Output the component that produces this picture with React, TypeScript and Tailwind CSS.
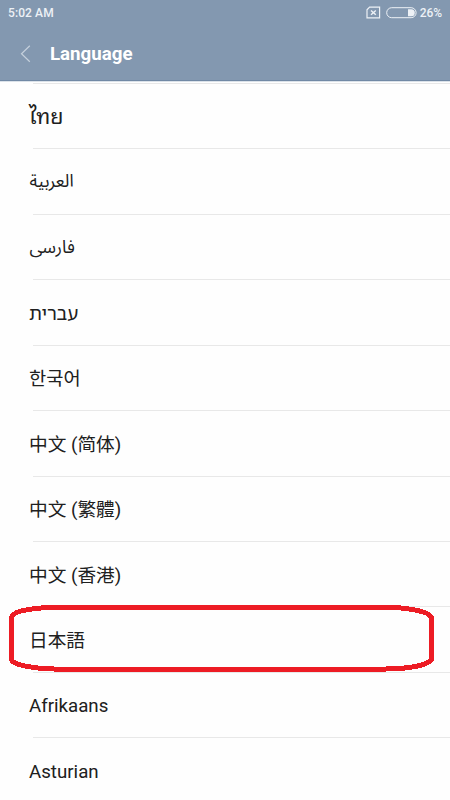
import React from 'react';

type Language = {
  name: string;
  lang: string;
  className: string;
};

const languages: Language[] = [
  { name: 'ไทย', lang: 'th', className: "pb-[2px] text-[21.5px] font-['Noto_Sans_Thai_Looped','Loma','Garuda','Noto_Sans',sans-serif]" },
  { name: 'العربية', lang: 'ar', className: "pb-[2px] pl-[0.6px] text-[17.5px] font-['Roboto','Noto_Sans_Arabic','DejaVu_Sans',sans-serif]" },
  { name: 'فارسی', lang: 'fa', className: "pb-[1px] pl-[0.4px] text-[17.5px] font-['Roboto','Noto_Sans_Arabic','DejaVu_Sans',sans-serif]" },
  { name: 'עברית', lang: 'he', className: "text-[18.8px] font-['Noto_Sans_Hebrew','Open_Sans','Liberation_Sans',sans-serif]" },
  { name: '한국어', lang: 'ko', className: "pt-[2px] text-[18.7px] font-['Roboto','Noto_Sans_CJK_KR',sans-serif]" },
  { name: '中文 (简体)', lang: 'zh-CN', className: "pt-[2px] text-[18.7px] font-['Roboto','Noto_Sans_CJK_SC',sans-serif]" },
  { name: '中文 (繁體)', lang: 'zh-TW', className: "pt-[2px] text-[18.7px] font-['Roboto','Noto_Sans_CJK_TC',sans-serif]" },
  { name: '中文 (香港)', lang: 'zh-HK', className: "pt-[3px] text-[18.7px] font-['Roboto','Noto_Sans_CJK_TC',sans-serif]" },
  { name: '日本語', lang: 'ja', className: "pt-[2px] text-[18.7px] font-['Roboto','Noto_Sans_CJK_JP',sans-serif]" },
  { name: 'Afrikaans', lang: 'af', className: "pt-[2px] text-[18.7px] font-['Roboto',sans-serif]" },
  { name: 'Asturian', lang: 'ast', className: "pt-[2px] text-[18.7px] font-['Roboto',sans-serif]" },
];

const StatusBar: React.FC = () => (
  <div className="flex h-[26px] items-center justify-between pl-2 pr-2 text-[12px] font-medium text-[#edf1f6]">
    <span className="tracking-[0.1px]">5:02 AM</span>
    <div className="flex items-center">
      {/* No SIM */}
      <svg className="-mt-0.5" width="15" height="13" viewBox="0 0 15 13" fill="none" stroke="currentColor">
        <path d="M3.6 1.2H13.6V11.8H1V3.8Z" strokeWidth="1.2" />
        <path d="M5 4.4L9.8 8.8M9.8 4.4L5 8.8" strokeWidth="1.4" />
      </svg>
      {/* Battery */}
      <svg className="ml-[5px]" width="31" height="12" viewBox="0 0 31 12" fill="none">
        <rect x="0.7" y="0.7" width="29.4" height="10" rx="5" stroke="currentColor" />
        <path d="M22 2.2H25.3A3.5 3.5 0 0 1 25.3 9.2H22Z" fill="currentColor" />
      </svg>
      <span className="ml-[3px] tracking-[-0.1px]">26%</span>
    </div>
  </div>
);

const LanguageRow: React.FC<{ language: Language }> = ({ language }) => (
  <li className="relative h-[65.45px]">
    <div className="ml-[33px] border-t border-[#e8e8e8]" />
    <div className="flex h-[65px] items-center pl-[29px]">
      <span lang={language.lang} className={`leading-6 whitespace-nowrap text-[#202020] ${language.className}`}>
        {language.name}
      </span>
    </div>
    {/* Hand-drawn marker around the Japanese entry */}
    {language.lang === 'ja' && (
      <svg
        className="absolute left-0 top-[-3px] z-10"
        width="450"
        height="72"
        viewBox="0 603.5 450 72"
        fill="none"
        shapeRendering="crispEdges"
      >
        <path
          d="M61 607.5H382C408 608 431.5 612 431.5 619V659C431.5 665 409 669.5 386 669.5H54C33 669 11.5 665 11.5 660V618C11.5 611 36 608 61 607.5Z"
          stroke="#ed1c24"
          strokeWidth="5"
        />
      </svg>
    )}
  </li>
);

export default function App() {
  return (
    <div className="h-[800px] w-[450px] overflow-hidden bg-[#fefefe] font-['Roboto',sans-serif]">
      <header className="h-[82px] border-b border-[#dbe2e9] bg-[#8398b0]">
        <div className="h-[81px] border-b border-[#7189a5]">
          <StatusBar />
          <div className="flex h-14 items-center pl-5">
            <svg width="11" height="18" viewBox="0 0 11 18" fill="none" stroke="#c5d0dc" strokeWidth="1.2">
              <path d="M9.8 0.7L1.5 8.7L9.8 16.7" />
            </svg>
            <h1 className="ml-[19px] pt-[1px] text-[18.7px] font-bold text-white">Language</h1>
          </div>
        </div>
      </header>
      <ul className="pt-[0.9px]">
        {languages.map((language) => (
          <LanguageRow key={language.lang} language={language} />
        ))}
      </ul>
    </div>
  );
}
